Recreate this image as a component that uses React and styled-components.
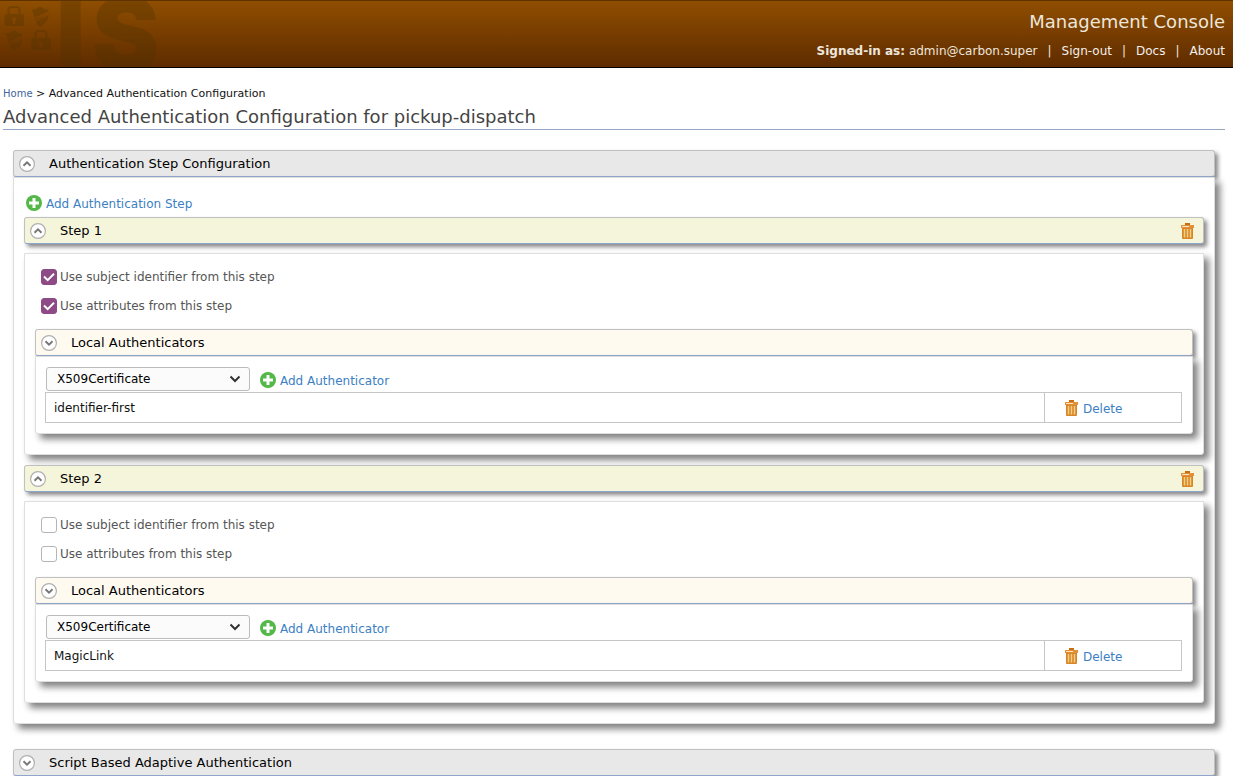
import React, { useState } from "react";
import styled, { createGlobalStyle } from "styled-components";

const GlobalStyle = createGlobalStyle`
  * { box-sizing: border-box; }
  body {
    margin: 0;
    background: #fff;
    color: #111;
    font-family: "DejaVu Sans", Verdana, sans-serif;
    font-size: 12px;
    line-height: 16px;
  }
  button, select { font: inherit; }
`;

const Header = styled.header`
  display: flex;
  justify-content: space-between;
  height: 68px;
  overflow: hidden;
  border-top: 1px solid #5f3300;
  border-bottom: 1px solid #000;
  background: linear-gradient(#8f4e00, #5f2c00);
  color: #ede6dc;
`;

const HeaderInfo = styled.div`
  display: flex;
  flex-direction: column;
  align-items: flex-end;
  gap: 9px;
  padding: 9px 8px 0 0;
`;

const ConsoleName = styled.div`
  font-size: 18px;
  line-height: 24px;
`;

const UserLinks = styled.ul`
  display: flex;
  margin: 0;
  padding: 0;
  list-style: none;
`;

const UserItem = styled.li`
  & + &::before {
    content: "|";
    margin: 0 10px;
  }
  a {
    color: #f2efea;
    text-decoration: none;
  }
`;

const Breadcrumb = styled.nav`
  padding: 18px 3px 0;
  font-size: 11px;
  line-height: 16px;
  a {
    color: #42669c;
    font-size: 10px;
    text-decoration: none;
  }
`;

const PageTitle = styled.h1`
  margin: 3px 8px 20px 3px;
  padding-bottom: 1px;
  border-bottom: 1px solid #94a6c8;
  color: #444;
  font-size: 18px;
  font-weight: 400;
  line-height: 23px;
`;

const Content = styled.main`
  padding: 0 18px 0 13px;
`;

const tones = { grey: "#e8e8e8", beige: "#f5f5dc", cream: "#fffaf0" };

const SectionBar = styled.div`
  display: flex;
  align-items: center;
  justify-content: space-between;
  height: 27px;
  padding: 0 9px 0 5px;
  border: 1px solid #c0c0c0;
  border-bottom-color: #8fa5cb;
  border-radius: 3px;
  background: ${(p) => tones[p.$tone]};
  box-shadow: 3px 3px 4px #888;
`;

const SectionToggle = styled.button`
  display: flex;
  align-items: center;
  gap: 14px;
  padding: 0;
  border: 0;
  background: none;
  color: #000;
  font-size: 13px;
  line-height: 16px;
  cursor: pointer;
  svg { margin-top: 1px; }
`;

const Panel = styled.section`
  padding: ${(p) => p.$padding};
  border: 1px solid #dedede;
  border-radius: 0 0 3px 3px;
  background: #fff;
  box-shadow: 5px 5px 7px #808080;
`;

const StepBlock = styled.div`
  & + & { margin-top: 10px; }
`;

const StepPanel = styled(Panel)`
  margin-top: 9px;
`;

const IconLink = styled.a`
  display: inline-flex;
  align-items: flex-start;
  gap: 4px;
  color: #3b7fc4;
  line-height: 18px;
  text-decoration: none;
`;

const AddStep = styled(IconLink)`
  display: flex;
  margin: 0 0 4px 2px;
`;

const IconButton = styled.button`
  display: flex;
  padding: 0;
  border: 0;
  background: none;
  cursor: pointer;
`;

const Options = styled.div`
  display: flex;
  flex-direction: column;
  gap: 13px;
  margin: 0 0 15px 6px;
`;

const Option = styled.label`
  display: flex;
  align-items: center;
  gap: 3px;
  color: #555;
`;

const CheckWrap = styled.span`
  display: grid;
  & > * { grid-area: 1 / 1; }
  svg { pointer-events: none; }
`;

const Checkbox = styled.input`
  appearance: none;
  width: 16px;
  height: 16px;
  margin: 0;
  border: 1px solid #b5b5b5;
  border-radius: 3px;
  background: #fff;
  &:checked {
    border-color: #8d4a86;
    background: #8d4a86;
  }
`;

const Picker = styled.div`
  display: flex;
  align-items: flex-end;
  gap: 10px;
  margin-bottom: 1px;
  padding-left: 1px;
  a { margin-bottom: 1px; }
`;

const SelectBox = styled.div`
  display: grid;
  width: 204px;
  & > * { grid-area: 1 / 1; }
  svg {
    place-self: center end;
    margin-right: 9px;
    pointer-events: none;
  }
`;

const Select = styled.select`
  appearance: none;
  height: 24px;
  padding: 0 10px;
  border: 1px solid #bbb;
  border-radius: 3px;
  background: #fbfbfb;
  color: #000;
`;

const AuthTable = styled.table`
  width: 100%;
  border-collapse: collapse;
  table-layout: fixed;
  td {
    height: 30px;
    padding: 0 8px;
    border: 1px solid #c6c6c6;
  }
  td:last-child {
    width: 137px;
    padding: 3px 0 0 20px;
  }
  a {
    display: flex;
    gap: 5px;
  }
`;

const LastBar = styled.div`
  margin-top: 25px;
`;

function Logo() {
  return (
    <svg width="170" height="66" viewBox="0 0 170 66" aria-hidden="true">
      <g fill="#4f3300" fillOpacity="0.32">
        <text y="69" fontFamily="Inter" fontWeight="900" fontSize="101">
          <tspan x="56">I</tspan>
          <tspan x="92">S</tspan>
        </text>
        <LockShape x={4} y={5} />
        <LockShape x={31} y={29} />
        <ShieldShape x={31} y={5} />
        <ShieldShape x={5} y={29} />
      </g>
    </svg>
  );
}

function LockShape({ x, y }) {
  return (
    <path
      transform={`translate(${x} ${y})`}
      fillRule="evenodd"
      d="M3.500 8V4q0-4 4-4h5q4 0 4 4v4h1.500q2 0 2 2v8q0 2-2 2H2.500q-2 0-2-2v-8q0-2 2-2zM5.500 8h9V4q0-2-2-2h-5q-2 0-2 2zM10 11.500a2 2 0 0 0-1.200 3.600V18h2.400v-2.900a2 2 0 0 0-1.200-3.600z"
    />
  );
}

function ShieldShape({ x, y }) {
  return (
    <g transform={`translate(${x} ${y})`}>
      <path d="M0 4q5-.5 9-3.500 4 3 8 3l.5 2L4 11.500Q2 9 2 6z" />
      <path d="M18 7.500q0 8-8.500 13.500Q6 19 4.500 15.500L18 9zM2 13.500l3 .5 12-6-12.500 5z" />
    </g>
  );
}

function ToggleIcon({ open }) {
  return (
    <svg width="16" height="16" viewBox="0 0 16 16" aria-hidden="true">
      <circle cx="8" cy="8" r="7.400" fill="#fff" stroke="#b0b0b0" strokeWidth="1.200" />
      <path d={open ? "M4.500 9.700 8 6.300l3.500 3.400" : "M4.500 6.300 8 9.700l3.500-3.400"} fill="none" stroke="#777" strokeWidth="1.900" />
    </svg>
  );
}

function PlusIcon() {
  return (
    <svg width="16" height="16" viewBox="0 0 16 16" aria-hidden="true">
      <circle cx="8" cy="8" r="8" fill="#52b848" />
      <path d="M8 3v10M3 8h10" stroke="#fff" strokeWidth="3" />
    </svg>
  );
}

function TrashIcon() {
  return (
    <svg width="13" height="16" viewBox="0 0 13 16" aria-hidden="true">
      <path d="M4 0h5v2H4z" fill="#c96d10" />
      <path d="M1 5h11v10q0 1-1 1H2q-1 0-1-1z" fill="#d98527" />
      <path d="M3.500 6v8.500M6.500 6v8.500M9.500 6v8.500" stroke="#f3d083" strokeWidth="1.500" />
      <path d="M0 2h13v3H0z" fill="#e3903b" />
      <path d="M1 3h7v1H1z" fill="#fae0bd" />
    </svg>
  );
}

function Section({ title, tone, open, action }) {
  return (
    <SectionBar $tone={tone}>
      <SectionToggle type="button" aria-expanded={open}>
        <ToggleIcon open={open} />
        {title}
      </SectionToggle>
      {action}
    </SectionBar>
  );
}

function CheckOption({ label, initial }) {
  const [checked, setChecked] = useState(initial);
  return (
    <Option>
      <CheckWrap>
        <Checkbox type="checkbox" checked={checked} onChange={(e) => setChecked(e.target.checked)} />
        {checked && (
          <svg width="16" height="16" viewBox="0 0 16 16" aria-hidden="true">
            <path d="M3 7.500 6.700 11.200 13 4.800" fill="none" stroke="#fff" strokeWidth="2" />
          </svg>
        )}
      </CheckWrap>
      {label}
    </Option>
  );
}

function Step({ number, selected, authenticator }) {
  return (
    <StepBlock>
      <Section
        title={`Step ${number}`}
        tone="beige"
        open
        action={
          <IconButton type="button" aria-label={`Delete step ${number}`}>
            <TrashIcon />
          </IconButton>
        }
      />
      <StepPanel $padding="15px 10px 20px">
        <Options>
          <CheckOption label="Use subject identifier from this step" initial={selected} />
          <CheckOption label="Use attributes from this step" initial={selected} />
        </Options>
        <Section title="Local Authenticators" tone="cream" open={false} />
        <Panel $padding="10px 10px 10px 9px">
          <Picker>
            <SelectBox>
              <Select aria-label="Local authenticator">
                <option>X509Certificate</option>
              </Select>
              <svg width="12" height="8" viewBox="0 0 12 8" aria-hidden="true">
                <path d="M1.500 1.500 6 6l4.500-4.500" fill="none" stroke="#333" strokeWidth="2" />
              </svg>
            </SelectBox>
            <IconLink href="#">
              <PlusIcon />
              Add Authenticator
            </IconLink>
          </Picker>
          <AuthTable>
            <tbody>
              <tr>
                <td>{authenticator}</td>
                <td>
                  <IconLink href="#">
                    <TrashIcon />
                    Delete
                  </IconLink>
                </td>
              </tr>
            </tbody>
          </AuthTable>
        </Panel>
      </StepPanel>
    </StepBlock>
  );
}

export default function App() {
  return (
    <>
      <GlobalStyle />
      <Header>
        <Logo />
        <HeaderInfo>
          <ConsoleName>Management Console</ConsoleName>
          <UserLinks>
            <UserItem><b>Signed-in as:</b> admin@carbon.super</UserItem>
            <UserItem><a href="#">Sign-out</a></UserItem>
            <UserItem><a href="#">Docs</a></UserItem>
            <UserItem><a href="#">About</a></UserItem>
          </UserLinks>
        </HeaderInfo>
      </Header>
      <Breadcrumb><a href="#">Home</a> &gt; Advanced Authentication Configuration</Breadcrumb>
      <PageTitle>Advanced Authentication Configuration for pickup-dispatch</PageTitle>
      <Content>
        <Section title="Authentication Step Configuration" tone="grey" open />
        <Panel $padding="17px 10px 20px">
          <AddStep href="#">
            <PlusIcon />
            Add Authentication Step
          </AddStep>
          <Step number={1} selected authenticator="identifier-first" />
          <Step number={2} selected={false} authenticator="MagicLink" />
        </Panel>
        <LastBar>
          <Section title="Script Based Adaptive Authentication" tone="grey" open={false} />
        </LastBar>
      </Content>
    </>
  );
}
